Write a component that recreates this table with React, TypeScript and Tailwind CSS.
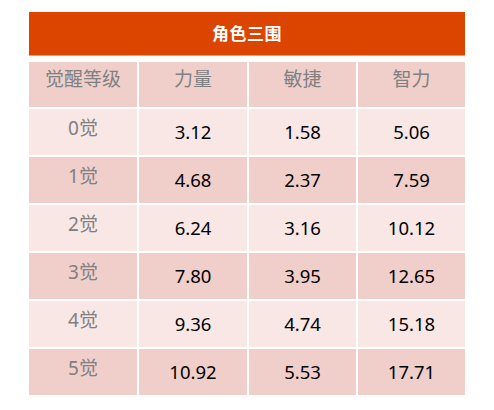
const rows = [
  { level: '0觉', str: '3.12', agi: '1.58', int: '5.06' },
  { level: '1觉', str: '4.68', agi: '2.37', int: '7.59' },
  { level: '2觉', str: '6.24', agi: '3.16', int: '10.12' },
  { level: '3觉', str: '7.80', agi: '3.95', int: '12.65' },
  { level: '4觉', str: '9.36', agi: '4.74', int: '15.18' },
  { level: '5觉', str: '10.92', agi: '5.53', int: '17.71' },
];

const headers = ['觉醒等级', '力量', '敏捷', '智力'];

export default function App() {
  return (
    <div
      className="min-h-[410px] w-[494px] bg-white pl-[29px] pt-[12px]"
      style={{ fontFamily: '"Noto Sans", "Noto Sans CJK SC", sans-serif' }}
    >
      <div className="flex h-[44px] w-[436px] items-center justify-center border-b border-[#ee9a78] bg-[#db4500] text-[17px] font-bold tracking-[0.5px] text-white">
        角色三围
      </div>
      <div className="mt-[6px] grid w-[436px] grid-cols-[108px_108px_107px_107px] gap-[2px]">
        {headers.map((h) => (
          <div
            key={h}
            className="flex h-[45px] justify-center bg-[#f0cfcb] pt-[3px] text-[19px] leading-[28px] text-[#808080]"
          >
            {h}
          </div>
        ))}
        {rows.map((r, i) => {
          const bg = i % 2 === 0 ? 'bg-[#f8e7e5]' : 'bg-[#f0cfcb]';
          return [
            <div
              key={r.level}
              className={`flex h-[46px] justify-center pt-[5px] text-[19px] leading-[28px] text-[#808080] ${bg}`}
            >
              {r.level}
            </div>,
            ...[r.str, r.agi, r.int].map((v, j) => (
              <div
                key={`${r.level}-${j}`}
                className={`flex h-[46px] items-center justify-center text-[18.5px] text-black ${bg}`}
              >
                {v}
              </div>
            )),
          ];
        })}
      </div>
    </div>
  );
}
